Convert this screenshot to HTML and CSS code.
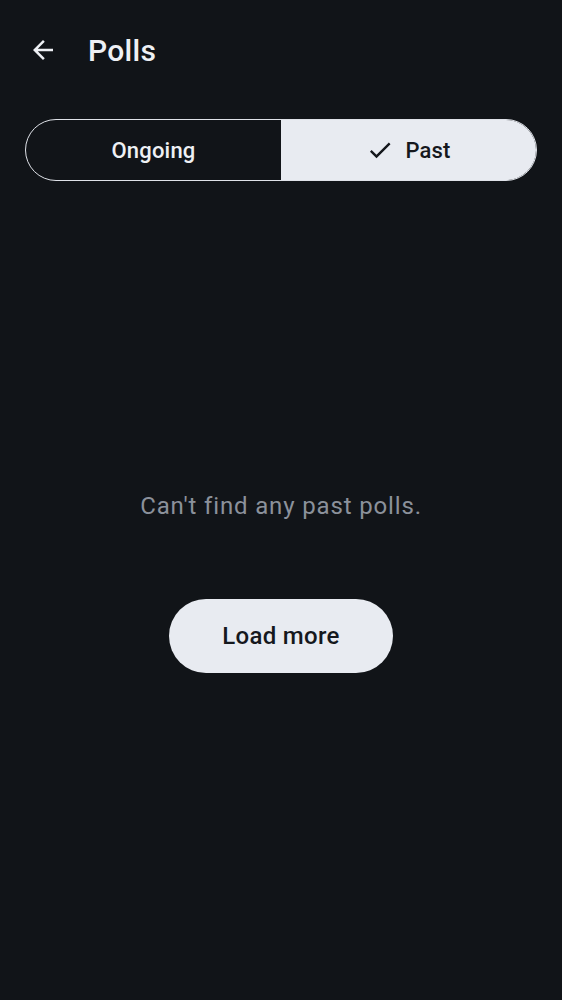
FILE: index.html
```html
<!DOCTYPE html>
<html>
<head>
<meta charset="utf-8">
<link rel="stylesheet" href="styles.css">
</head>
<body>
<div class="screen">
  <header class="topbar">
    <svg class="back" width="30" height="30" viewBox="0 0 24 24"><path d="M20 11H7.83l5.59-5.59L12 4l-8 8 8 8 1.41-1.41L7.83 13H20v-2z" fill="#eef0f4"/></svg>
    <h1 class="title">Polls</h1>
  </header>
  <div class="segments">
    <div class="seg seg-off">Ongoing</div>
    <div class="seg seg-on">
      <svg width="28" height="28" viewBox="0 0 24 24"><path d="M9 16.17L4.83 12l-1.42 1.41L9 19 21 7l-1.41-1.41z" fill="#15181d"/></svg>
      <span>Past</span>
    </div>
  </div>
  <main class="empty">
    <p class="msg">Can't find any past polls.</p>
    <button class="load">Load more</button>
  </main>
</div>
</body>
</html>
```
FILE: styles.css
```css
html, body {
  margin: 0;
  padding: 0;
  background: #111418;
  font-family: Roboto, "Noto Sans", sans-serif;
}
.screen {
  width: 562px;
  height: 1000px;
  display: flex;
  flex-direction: column;
}
.topbar {
  display: flex;
  align-items: center;
  height: 100px;
  padding-left: 28px;
  box-sizing: border-box;
}
.back {
  display: block;
}
.title {
  margin: 0 0 0 30px;
  font-size: 30px;
  font-weight: 500;
  color: #eef0f4;
  letter-spacing: 0.3px;
}
.segments {
  margin: 19px 25px 0 25px;
  height: 62px;
  display: flex;
  border: 1px solid #dfe2e8;
  border-radius: 31px;
  overflow: hidden;
  box-sizing: border-box;
}
.seg {
  flex: 1;
  display: flex;
  align-items: center;
  justify-content: center;
  font-size: 22px;
  font-weight: 500;
  letter-spacing: 0.2px;
}
.seg-off {
  color: #eef0f4;
}
.seg-on {
  background: #e8ebf1;
  color: #15181d;
  gap: 11px;
}
.seg-on svg {
  display: block;
}
.empty {
  display: flex;
  flex-direction: column;
  align-items: center;
  padding-top: 308px;
}
.msg {
  margin: 0;
  font-size: 24px;
  color: #8b919b;
  letter-spacing: 0.85px;
  line-height: 34px;
}
.load {
  margin-top: 76px;
  width: 224px;
  height: 74px;
  border: none;
  border-radius: 37px;
  background: #e8ebf1;
  color: #15181d;
  font-family: Roboto, "Noto Sans", sans-serif;
  font-size: 24px;
  font-weight: 500;
  letter-spacing: 0.3px;
}
```
